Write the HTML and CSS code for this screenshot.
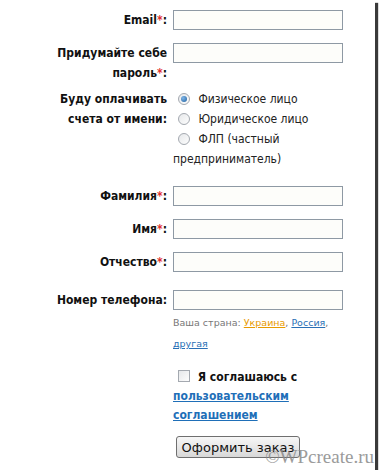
FILE: index.html
```html
<!DOCTYPE html>
<html lang="ru">
<head>
  <meta charset="UTF-8">
  <title>Оформление заказа</title>
  <link rel="stylesheet" href="styles.css">
</head>
<body>
  <div class="page">
    <form class="order">
      <!-- Email -->
      <div class="row row-email">
        <label class="label">Email<span class="req">*</span>:</label>
        <div class="field"><input class="text" type="text"></div>
      </div>

      <!-- Password -->
      <div class="row row-pass">
        <label class="label">Придумайте себе<br>пароль<span class="req">*</span>:</label>
        <div class="field"><input class="text" type="password"></div>
      </div>

      <!-- Payer type -->
      <div class="row row-payer">
        <label class="label">Буду оплачивать<br>счета от имени:</label>
        <div class="field options">
          <div><input class="radio" type="radio" name="payer" checked> Физическое лицо</div>
          <div><input class="radio" type="radio" name="payer"> Юридическое лицо</div>
          <div><input class="radio" type="radio" name="payer"> ФЛП (частный предприниматель)</div>
        </div>
      </div>

      <div class="row row-first">
        <label class="label">Фамилия<span class="req">*</span>:</label>
        <div class="field"><input class="text" type="text"></div>
      </div>

      <div class="row">
        <label class="label">Имя<span class="req">*</span>:</label>
        <div class="field"><input class="text" type="text"></div>
      </div>

      <div class="row">
        <label class="label">Отчество<span class="req">*</span>:</label>
        <div class="field"><input class="text" type="text"></div>
      </div>

      <!-- Phone -->
      <div class="row row-phone">
        <label class="label">Номер телефона:</label>
        <div class="field">
          <input class="text" type="text">
          <div class="hint">Ваша страна: <a href="#" class="ua">Украина</a>, <a href="#">Россия</a>, <a href="#">другая</a></div>
        </div>
      </div>

      <!-- Agreement -->
      <div class="row row-agree">
        <div></div>
        <div class="field agree">
          <input class="check" type="checkbox"> Я соглашаюсь с <a href="#">пользовательским соглашением</a>
        </div>
      </div>

      <div class="row row-submit">
        <div></div>
        <div class="field"><button class="submit" type="button">Оформить заказ</button></div>
      </div>
    </form>

    <div class="watermark">©WPcreate.ru</div>
  </div>
</body>
</html>
```

FILE: styles.css
```css
/* General */
* {
  margin: 0;
  padding: 0;
  box-sizing: border-box;
}

body {
  background: #fff;
  font-family: "DejaVu Sans Condensed", "DejaVu Sans", Verdana, sans-serif;
  font-size: 12px;
  color: #111;
}

/* Screenshot frame with shadow */
.page {
  position: relative;
  width: 375px;
  height: 470px;
  background: #fff;
  box-shadow: 3px 3px 1px #3a3a3a;
}

.order {
  padding-top: 10px;
}

/* Rows */
.row {
  display: grid;
  grid-template-columns: 167px 170px;
  column-gap: 6px;
  margin-top: 13px;
}

.row-email { margin-top: 0; }
.row-payer { margin-top: 6px; }
.row-first { margin-top: 17px; }
.row-phone { margin-top: 18px; }
.row-agree { margin-top: 14px; }
.row-submit { margin-top: 11px; }

.label {
  text-align: right;
  font-weight: bold;
  line-height: 20px;
}

.req {
  color: #e0302f;
}

.text {
  display: block;
  width: 170px;
  height: 20px;
  border: 1px solid #8e99a4;
  background: #fdfdfa;
  font: inherit;
}

/* Radio options */
.options {
  line-height: 20px;
  color: #222;
}

.radio,
.check {
  appearance: none;
  -webkit-appearance: none;
  display: inline-block;
  width: 12px;
  height: 12px;
  vertical-align: -2px;
  margin: 0 5px 0 5px;
  border: 1px solid #a4a9b0;
  background: linear-gradient(135deg, #e6e8ea, #fdfdfd);
}

.radio {
  border-radius: 50%;
  position: relative;
}

.radio:checked::after {
  content: "";
  position: absolute;
  left: 2px;
  top: 2px;
  width: 6px;
  height: 6px;
  border-radius: 50%;
  background: radial-gradient(circle at 35% 35%, #7fb6e8, #1f5f9e);
}

/* Phone hint */
.hint {
  margin-top: 2px;
  font-family: "DejaVu Sans", Verdana, sans-serif;
  font-size: 9.5px;
  line-height: 21px;
  color: #777;
}

.hint a {
  color: #2a6fb5;
}

.hint a.ua {
  color: #e89a00;
}

/* Agreement */
.agree {
  font-weight: bold;
  line-height: 19px;
}

.agree .check {
  margin-right: 4px;
  vertical-align: -1px;
}

.agree a {
  color: #1f6fb8;
}

.submit {
  margin-left: 3px;
  width: 124px;
  height: 22px;
  border: 1px solid #6f6f6f;
  border-radius: 3px;
  background: linear-gradient(#f7f7f7, #d8d8d8);
  font-family: "DejaVu Sans", Verdana, sans-serif;
  font-size: 13px;
  color: #111;
}

/* Watermark over the corner */
.watermark {
  position: absolute;
  right: 1px;
  bottom: 2px;
  font-family: "Liberation Serif", serif;
  font-size: 19px;
  color: #8a8a8a;
  opacity: 0.85;
}
```
